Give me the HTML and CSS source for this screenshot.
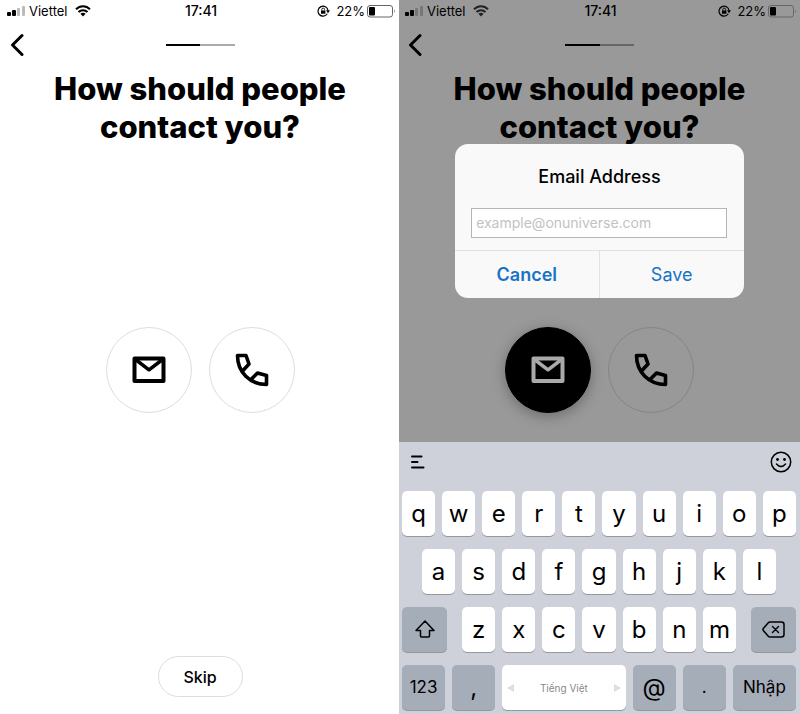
FILE: index.html
```html
<!DOCTYPE html>
<html lang="en">
<head>
<meta charset="utf-8">
<meta name="viewport" content="width=device-width, initial-scale=1">
<title>Contact setup</title>
<link rel="stylesheet" href="styles.css">
</head>
<body>
<svg class="sprite" aria-hidden="true">
  <symbol id="signal" viewBox="0 0 18 11">
    <rect x="0" y="6" width="4" height="4" rx="1"/>
    <rect x="5" y="4" width="4" height="6" rx="1"/>
    <rect class="faint" x="10" y="2" width="3" height="8" rx="1"/>
    <rect class="faint" x="15" y="0" width="3" height="10" rx="1"/>
  </symbol>
  <symbol id="wifi" viewBox="0 0 16 12">
    <path class="wave" d="M1 4.3C5 .2 11 .2 15 4.3" fill="none" stroke="currentColor" stroke-width="2"/>
    <path class="mid" d="M3.5 7C6 4.5 10 4.5 12.5 7" fill="none" stroke="currentColor" stroke-width="2"/>
    <path d="M5.4 8.7C7 7.300 9 7.300 10.600 8.700L8 11.500Z"/>
  </symbol>
  <symbol id="lock" viewBox="0 0 13 12">
    <path d="M10.300 8.800A5 5 0 1 1 11 5.500" fill="none" stroke="currentColor" stroke-width="1.200"/>
    <path d="M9 5.300h4L11 8.200Z"/>
    <rect x="4" y="5.400" width="4.400" height="3.400" rx=".4"/>
    <path d="M4.800 5.600V4.500a1.400 1.400 0 0 1 2.800 0v1.100" fill="none" stroke="currentColor" stroke-width=".9"/>
  </symbol>
  <symbol id="battery" viewBox="0 0 28 13">
    <rect class="case" x=".5" y=".5" width="25" height="11.500" rx="2.500" fill="none"/>
    <path class="cap" d="M27 4.500q1.300 1.700 0 3.500z"/>
    <rect x="2" y="2" width="6" height="8.500" rx="1"/>
  </symbol>
  <symbol id="back" viewBox="0 0 14 24">
    <path d="M12 2.500 2.500 12 12 21.500" fill="none" stroke="currentColor" stroke-width="3" stroke-linecap="round" stroke-linejoin="round"/>
  </symbol>
  <symbol id="mail" viewBox="0 0 34 28">
    <path d="M2.500 2.500H31.500V25H2.500Z" fill="none" stroke="currentColor" stroke-width="4" stroke-linejoin="round"/>
    <path d="M3.500 3.500 17 13.800 30.500 3.500" fill="none" stroke="currentColor" stroke-width="3.500" stroke-linejoin="round"/>
  </symbol>
  <symbol id="phone" viewBox="0 0 34 34">
    <path d="M8 17.500 14 11 11 2.500H2.500C2.500 19 15 31.500 31.500 31.500V22.500L22.500 20 16.500 26" fill="none" stroke="currentColor" stroke-width="3.600" stroke-linejoin="round"/>
  </symbol>
  <symbol id="smile" viewBox="0 0 22 22">
    <circle cx="11" cy="11" r="9.700" fill="none" stroke="currentColor" stroke-width="1.500"/>
    <circle cx="7.500" cy="8.500" r="1.400"/><circle cx="14.500" cy="8.500" r="1.400"/>
    <path d="M6.500 13q4.500 5 9 0" fill="none" stroke="currentColor" stroke-width="1.500" stroke-linecap="round"/>
  </symbol>
  <symbol id="lines" viewBox="0 0 14 14">
    <path d="M1 1.500H10.500M1 7H6.500M1 12.500H12.500" fill="none" stroke="currentColor" stroke-width="2" stroke-linecap="round"/>
  </symbol>
  <symbol id="shift" viewBox="0 0 20 18">
    <path d="M10 1 19 10.500H14.500V16q0 1-1 1H6.500q-1 0-1-1V10.500H1Z" fill="none" stroke="currentColor" stroke-width="1.500" stroke-linejoin="round"/>
  </symbol>
  <symbol id="erase" viewBox="0 0 23 17">
    <path d="M8 1H19.500q2.500 0 2.500 2.500V13.500Q22 16 19.500 16H8Q7 16 6.300 15.200L1.300 9.500Q.6 8.500 1.300 7.500L6.300 1.800Q7 1 8 1Z" fill="none" stroke="currentColor" stroke-width="1.500"/>
    <path d="M10.500 5.500l6 6M16.500 5.500l-6 6" fill="none" stroke="currentColor" stroke-width="1.400" stroke-linecap="round"/>
  </symbol>
</svg>

<main class="board">
  <section class="screen plain">
    <div class="status">
      <div class="carrier"><svg class="i-signal"><use href="#signal"/></svg><span>Viettel</span><svg class="i-wifi"><use href="#wifi"/></svg></div>
      <div class="clock">17:41</div>
      <div class="power"><svg class="i-lock"><use href="#lock"/></svg><span>22%</span><svg class="i-battery"><use href="#battery"/></svg></div>
    </div>
    <nav class="nav">
      <button class="back" aria-label="Back"><svg><use href="#back"/></svg></button>
      <div class="steps"><span class="done"></span><span></span></div>
    </nav>
    <h1>How should people<br>contact you?</h1>
    <div class="choices">
      <button class="choice" aria-label="Email"><svg class="i-mail"><use href="#mail"/></svg></button>
      <button class="choice" aria-label="Phone"><svg class="i-phone"><use href="#phone"/></svg></button>
    </div>
    <button class="skip">Skip</button>
  </section>

  <section class="screen dimmed">
    <div class="status">
      <div class="carrier"><svg class="i-signal"><use href="#signal"/></svg><span>Viettel</span><svg class="i-wifi"><use href="#wifi"/></svg></div>
      <div class="clock">17:41</div>
      <div class="power"><svg class="i-lock"><use href="#lock"/></svg><span>22%</span><svg class="i-battery"><use href="#battery"/></svg></div>
    </div>
    <nav class="nav">
      <button class="back" aria-label="Back"><svg><use href="#back"/></svg></button>
      <div class="steps"><span class="done"></span><span></span></div>
    </nav>
    <h1>How should people<br>contact you?</h1>
    <div class="choices">
      <button class="choice selected" aria-label="Email"><svg class="i-mail"><use href="#mail"/></svg></button>
      <button class="choice" aria-label="Phone"><svg class="i-phone"><use href="#phone"/></svg></button>
    </div>

    <form class="dialog" role="dialog" aria-labelledby="dialog-title">
      <label class="title" id="dialog-title" for="email">Email Address</label>
      <input id="email" type="email" placeholder="example@onuniverse.com">
      <div class="actions">
        <button type="button" class="cancel">Cancel</button>
        <button type="button">Save</button>
      </div>
    </form>

    <div class="keyboard">
      <div class="tools">
        <button aria-label="Text tools"><svg class="i-lines"><use href="#lines"/></svg></button>
        <button aria-label="Emoji"><svg class="i-smile"><use href="#smile"/></svg></button>
      </div>
      <div class="keys">
        <button>q</button><button>w</button><button>e</button><button>r</button><button>t</button><button>y</button><button>u</button><button>i</button><button>o</button><button>p</button>
      </div>
      <div class="keys middle">
        <button>a</button><button>s</button><button>d</button><button>f</button><button>g</button><button>h</button><button>j</button><button>k</button><button>l</button>
      </div>
      <div class="keys lower">
        <button class="dark" aria-label="Shift"><svg class="i-shift"><use href="#shift"/></svg></button>
        <div class="keys"><button>z</button><button>x</button><button>c</button><button>v</button><button>b</button><button>n</button><button>m</button></div>
        <button class="dark" aria-label="Delete"><svg class="i-erase"><use href="#erase"/></svg></button>
      </div>
      <div class="keys bottom">
        <button class="dark word">123</button>
        <button class="dark">,</button>
        <button class="space">Tiếng Việt</button>
        <button class="dark">@</button>
        <button class="dark word">.</button>
        <button class="dark word">Nhập</button>
      </div>
    </div>
  </section>
</main>
</body>
</html>
```
FILE: styles.css
```css
* { box-sizing: border-box; }

body {
  margin: 0;
  font-family: Inter, "Liberation Sans", sans-serif;
  color: #000;
}

button {
  margin: 0;
  padding: 0;
  border: 0;
  background: none;
  color: inherit;
  font: inherit;
}

svg { display: block; fill: currentColor; }
.sprite { position: absolute; width: 0; height: 0; }

.board {
  display: grid;
  grid-template-columns: 399fr 401fr;
  min-height: 100vh;
}

.screen {
  --ink-faint: #bbb;
  --ring: #ddd;
  position: relative;
  display: flex;
  flex-direction: column;
  background: #fff;
}
.plain { padding-left: 1px; }

.dimmed {
  --ink-faint: #777;
  --ring: #858585;
  background: #999;
}

.status {
  display: grid;
  grid-template-columns: 1fr auto 1fr;
  align-items: center;
  height: 22px;
  padding: 0 4px 0 6px;
  font-size: 13px;
  line-height: 16px;
}

.carrier, .power { display: flex; align-items: center; }
.carrier { gap: 4px; }
.power { gap: 2px; justify-content: flex-end; }
.clock { font-size: 14px; font-weight: 500; }

.i-signal { width: 18px; height: 11px; }
.i-wifi { width: 16px; height: 12px; margin-left: 3px; }
.i-lock { width: 13px; height: 12px; margin-right: 4px; }
.i-battery { width: 28px; height: 13px; }
.faint { fill: var(--ink-faint); }
.case { stroke: #666; }
.cap { fill: #666; }
.dimmed .i-wifi { color: #222; }

.nav {
  display: grid;
  grid-template-columns: 1fr auto 1fr;
  align-items: center;
  height: 46px;
  padding: 0 9px;
}
.back { justify-self: start; }
.back svg { width: 14px; height: 24px; }
.steps { display: flex; width: 69px; }
.steps span { flex: 1; height: 2px; background: #aaa; }
.dimmed .steps span { background: #666; }
.steps .done, .dimmed .steps .done { background: #000; }

h1 {
  margin: 2px 0 0;
  font-size: 31px;
  font-weight: 800;
  line-height: 38px;
  text-align: center;
}

.choices {
  display: flex;
  justify-content: center;
  gap: 17px;
  margin-top: 181px;
}
.choice {
  display: grid;
  place-items: center;
  width: 86px;
  height: 86px;
  border: 1px solid var(--ring);
  border-radius: 50%;
}
.selected {
  border-color: #000;
  background: #000;
  color: #aaa;
  box-shadow: 0 3px 14px rgba(0, 0, 0, 0.3);
}
.i-mail { width: 34px; height: 28px; }
.i-phone { width: 34px; height: 34px; }

.skip {
  align-self: center;
  width: 85px;
  height: 41px;
  margin: auto 0 17px;
  border: 1px solid var(--ring);
  border-radius: 21px;
  font-size: 16px;
  font-weight: 500;
}

.dialog {
  position: absolute;
  top: 144px;
  left: 14%;
  right: 14%;
  border-radius: 13px;
  background: #f9f9f9;
  overflow: hidden;
}
.title {
  display: block;
  padding: 21px 16px 19px;
  font-size: 18px;
  font-weight: 500;
  line-height: 24px;
  text-align: center;
}
.dialog input {
  display: block;
  width: calc(100% - 33px);
  height: 30px;
  margin: 0 16px 12px;
  padding: 0 4px 2px;
  border: 1px solid #b5b5b5;
  border-radius: 0;
  background: #fff;
  font: 14px Inter, "Liberation Sans", sans-serif;
}
.dialog input::placeholder { color: #c2c2c2; }
.actions {
  display: grid;
  grid-template-columns: 1fr 1fr;
  border-top: 1px solid #e2e2e2;
  color: #1873c5;
  font-size: 18px;
}
.actions button { height: 47px; }
.actions .cancel { border-right: 1px solid #e2e2e2; font-weight: 600; }

.keyboard {
  display: flex;
  flex-direction: column;
  gap: 13px;
  margin-top: auto;
  padding: 0 4px 4px 3px;
  background: #ced1da;
}
.tools {
  display: flex;
  align-items: center;
  justify-content: space-between;
  height: 36px;
  padding: 3px 4px 0 9px;
}
.i-lines { width: 14px; height: 14px; }
.i-smile { width: 22px; height: 22px; }

.keys { display: flex; gap: 7px; }
.keys button {
  display: grid;
  place-items: center;
  flex: 1;
  height: 45px;
  padding-bottom: 1px;
  border-radius: 5px;
  background: #fff;
  box-shadow: 0 1px 0 #95979d;
  font-size: 24px;
}
.keys .dark { background: #a5adb8; }
.middle { padding: 0 20px; }
.lower { gap: 15px; }
.lower .keys { flex: 274; }
.lower .dark { flex: 45; }
.bottom { display: grid; grid-template-columns: 43fr 43fr 123fr 43fr 43fr 63fr; }
.keys .word { font-size: 17px; }
.keys .space {
  display: flex;
  align-items: center;
  justify-content: space-between;
  padding: 0 5px;
  color: #888;
  font-size: 10px;
}
.space::before, .space::after {
  content: "";
  border: solid transparent;
  border-width: 4px 0;
}
.space::before { border-right: 7px solid #ddd; }
.space::after { border-left: 7px solid #ddd; }
.i-shift { width: 20px; height: 18px; }
.i-erase { width: 23px; height: 17px; }
```
